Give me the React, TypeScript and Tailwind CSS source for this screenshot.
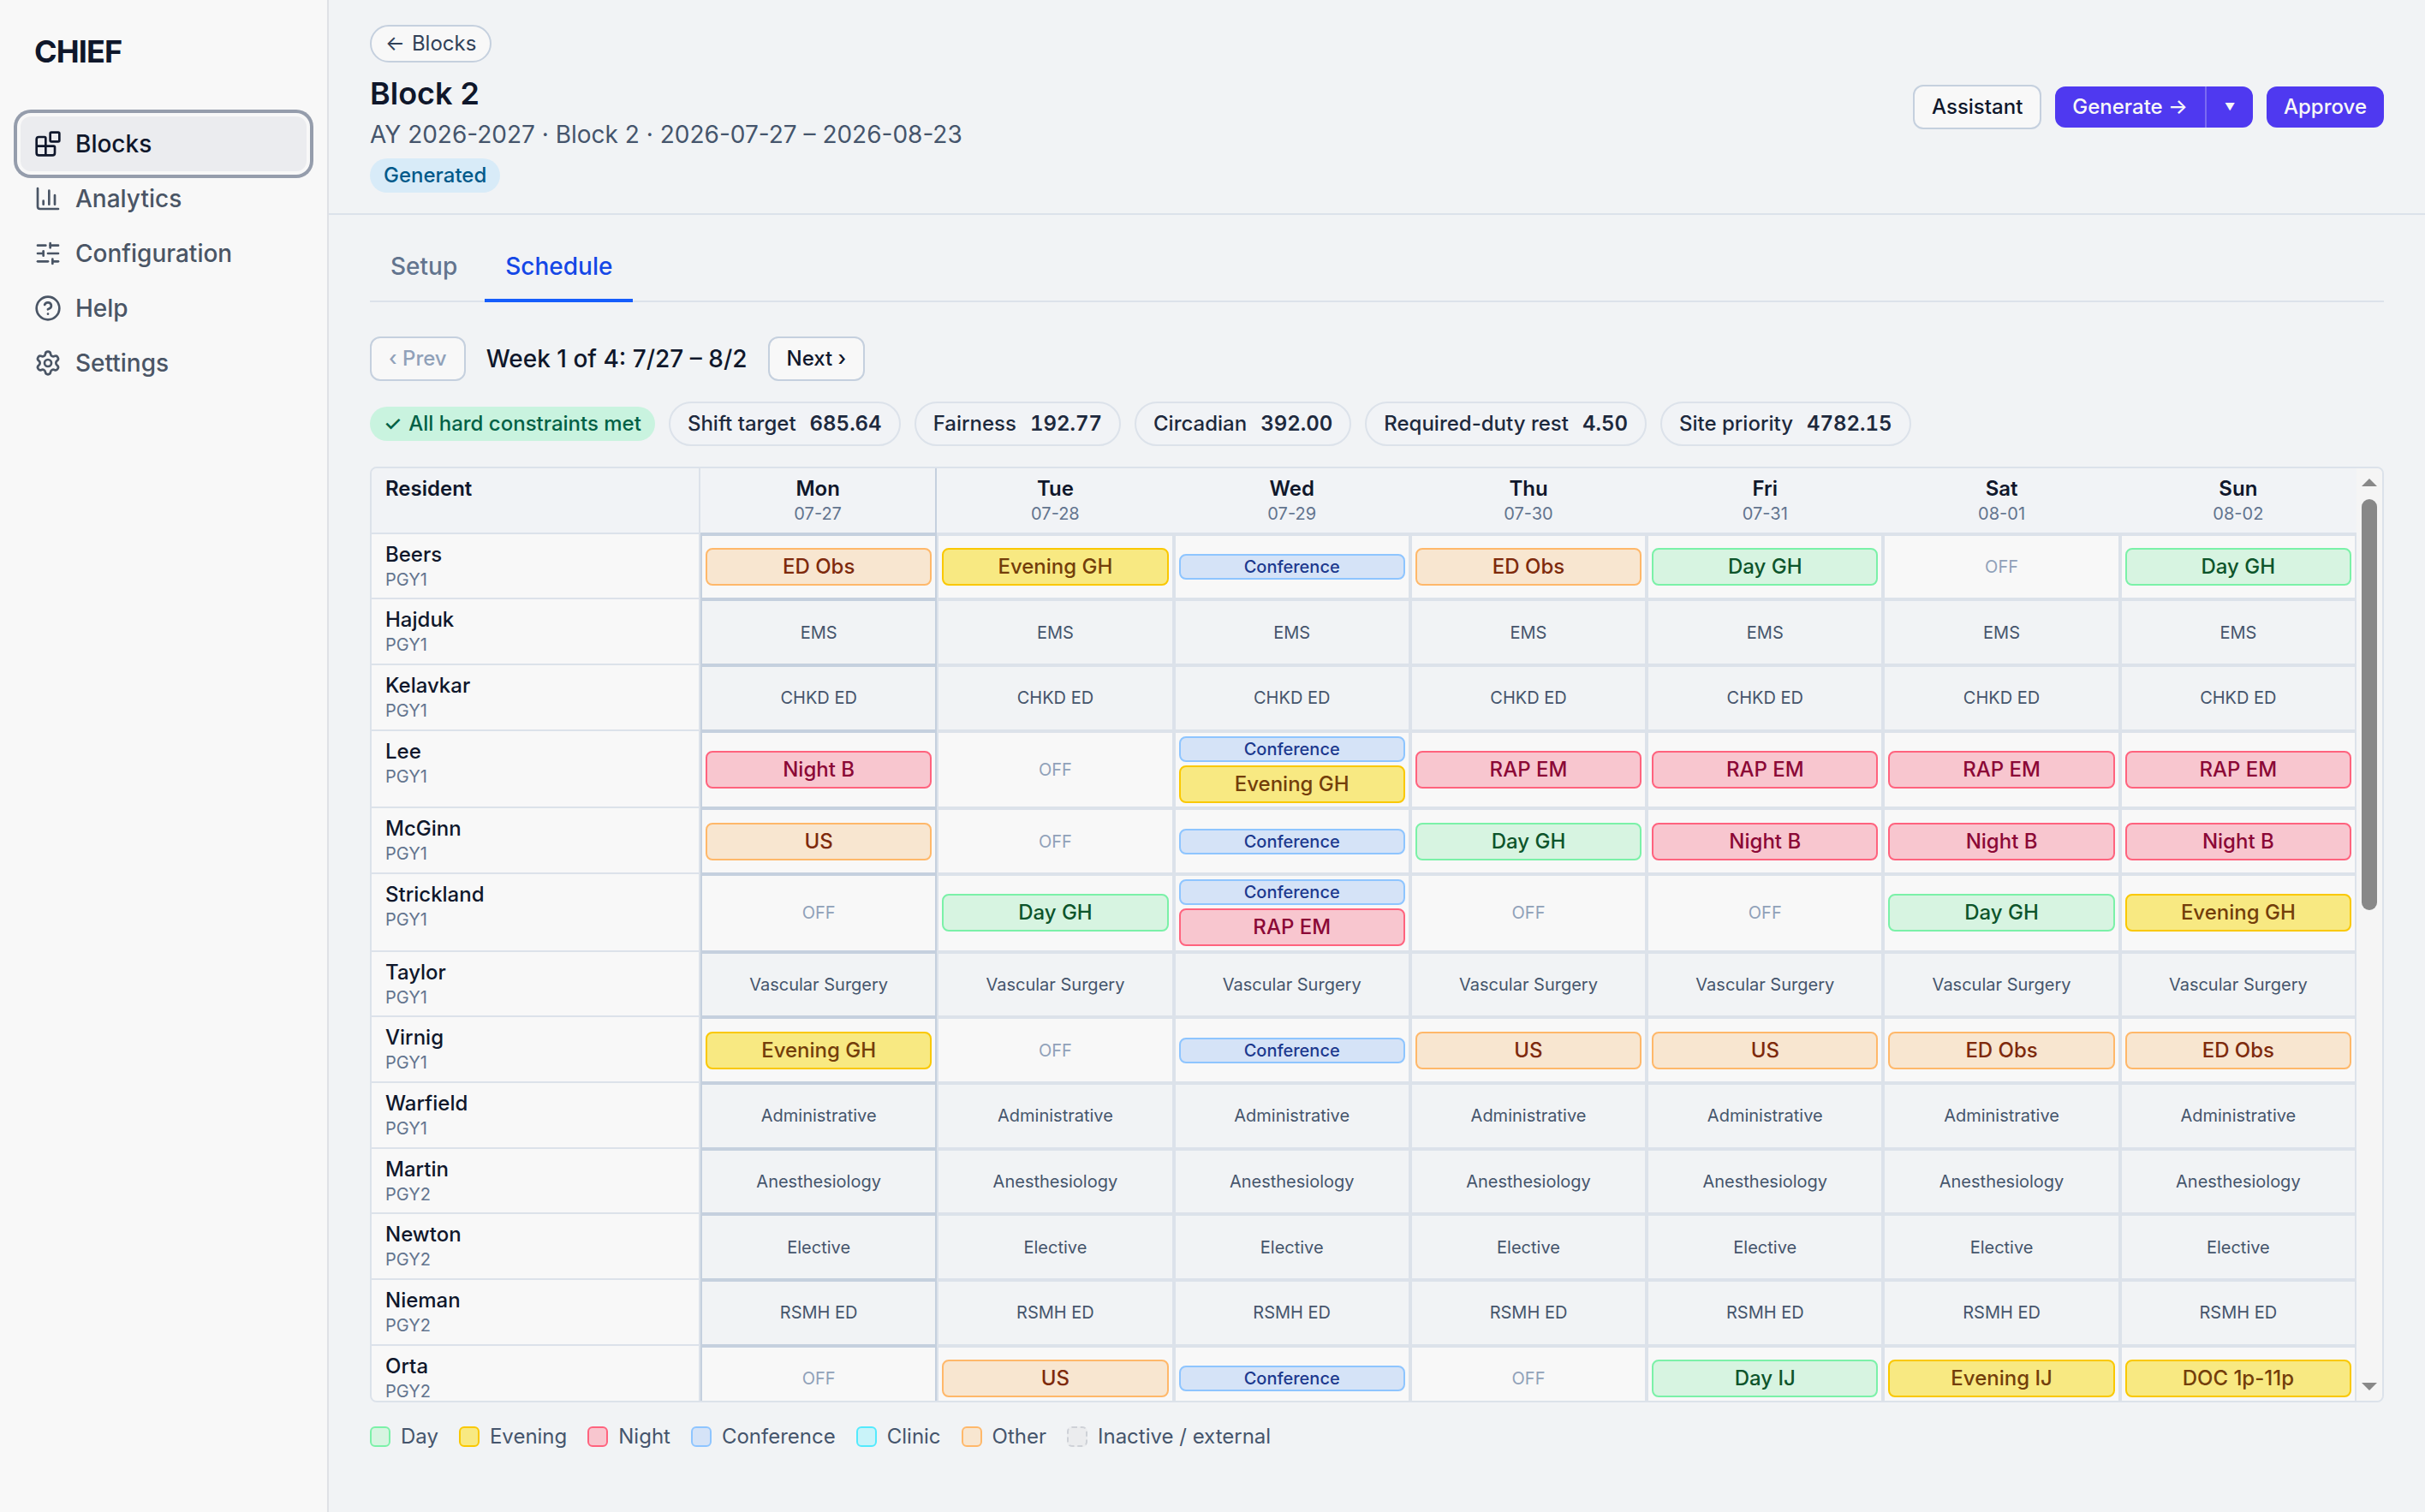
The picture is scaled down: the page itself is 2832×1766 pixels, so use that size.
import { Blocks, ChartColumn, CircleHelp, Settings, SlidersHorizontal } from "lucide-react";
import clsx from "clsx";

type Kind = "day" | "evening" | "night" | "conference" | "clinic" | "other" | "inactive";

const KIND: Record<Kind, string> = {
  day: "bg-[#d7f4e1] border-[#7bf1a8] text-green-900",
  evening: "bg-[#f8e982] border-[#fac800] text-yellow-900",
  night: "bg-[#f8c6cf] border-[#ff637e] text-rose-900",
  conference: "bg-[#d5e3f7] border-[#8ec5ff] text-blue-900",
  clinic: "bg-[#c9f3f9] border-[#53eafd] text-cyan-900",
  other: "bg-[#f8e6d0] border-[#ffb86a] text-orange-900",
  inactive: "bg-[#ebecee] border-dashed border-[#ced1d7]",
};

const NAV = [
  { label: "Blocks", icon: Blocks, active: true },
  { label: "Analytics", icon: ChartColumn },
  { label: "Configuration", icon: SlidersHorizontal },
  { label: "Help", icon: CircleHelp },
  { label: "Settings", icon: Settings },
];

const SCORES = [
  ["Shift target", "685.64"],
  ["Fairness", "192.77"],
  ["Circadian", "392.00"],
  ["Required-duty rest", "4.50"],
  ["Site priority", "4782.15"],
];

const DAYS = [
  ["Mon", "07-27"],
  ["Tue", "07-28"],
  ["Wed", "07-29"],
  ["Thu", "07-30"],
  ["Fri", "07-31"],
  ["Sat", "08-01"],
  ["Sun", "08-02"],
];

const LEGEND: [Kind, string][] = [
  ["day", "Day"],
  ["evening", "Evening"],
  ["night", "Night"],
  ["conference", "Conference"],
  ["clinic", "Clinic"],
  ["other", "Other"],
  ["inactive", "Inactive / external"],
];

type Resident = {
  name: string;
  level: string;
  // Seven cells, or a single service that covers the whole week
  week: string[] | string;
};

const RESIDENTS: Resident[] = [
  { name: "Beers", level: "PGY1", week: ["ED Obs", "Evening GH", "Conference", "ED Obs", "Day GH", "OFF", "Day GH"] },
  { name: "Hajduk", level: "PGY1", week: "EMS" },
  { name: "Kelavkar", level: "PGY1", week: "CHKD ED" },
  { name: "Lee", level: "PGY1", week: ["Night B", "OFF", "Conference|Evening GH", "RAP EM", "RAP EM", "RAP EM", "RAP EM"] },
  { name: "McGinn", level: "PGY1", week: ["US", "OFF", "Conference", "Day GH", "Night B", "Night B", "Night B"] },
  { name: "Strickland", level: "PGY1", week: ["OFF", "Day GH", "Conference|RAP EM", "OFF", "OFF", "Day GH", "Evening GH"] },
  { name: "Taylor", level: "PGY1", week: "Vascular Surgery" },
  { name: "Virnig", level: "PGY1", week: ["Evening GH", "OFF", "Conference", "US", "US", "ED Obs", "ED Obs"] },
  { name: "Warfield", level: "PGY1", week: "Administrative" },
  { name: "Martin", level: "PGY2", week: "Anesthesiology" },
  { name: "Newton", level: "PGY2", week: "Elective" },
  { name: "Nieman", level: "PGY2", week: "RSMH ED" },
  { name: "Orta", level: "PGY2", week: ["OFF", "US", "Conference", "OFF", "Day IJ", "Evening IJ", "DOC 1p-11p"] },
];

function kindOf(shift: string): Kind {
  if (shift === "Conference") return "conference";
  if (shift.startsWith("Day")) return "day";
  if (shift.startsWith("Evening") || shift.startsWith("DOC")) return "evening";
  if (shift.startsWith("Night") || shift.startsWith("RAP")) return "night";
  return "other";
}

function ShiftChip({ shift }: { shift: string }) {
  const kind = kindOf(shift);
  return (
    <div
      className={clsx(
        "flex w-full shrink-0 items-center justify-center rounded-lg border-2 font-medium",
        kind === "conference" ? "h-[30px] text-[20px]" : "h-11 text-[24px]",
        KIND[kind]
      )}
    >
      {shift}
    </div>
  );
}

function DayCell({ value, external, first }: { value: string; external: boolean; first: boolean }) {
  const muted = external || value === "OFF";
  return (
    <div
      className={clsx(
        "flex min-w-0 flex-col items-center justify-center gap-1 border-2 px-1",
        first ? "border-[#c5d0de]" : "border-[#dce2ea]",
        external ? "bg-[#f1f3f5]" : "bg-[#f8f8f8]"
      )}
    >
      {muted ? (
        <span className={clsx("text-[20px]", external ? "text-slate-600" : "text-slate-400")}>{value}</span>
      ) : (
        value.split("|").map((s) => <ShiftChip key={s} shift={s} />)
      )}
    </div>
  );
}

function ResidentRow({ resident }: { resident: Resident }) {
  const { name, level, week } = resident;
  const external = typeof week === "string";
  const cells = external ? DAYS.map(() => week) : week;
  const stacked = cells.some((c) => c.includes("|"));
  return (
    <div className={clsx("flex shrink-0", stacked ? "h-[90.66px]" : "h-[76.66px]")}>
      <div className="w-[384px] shrink-0 border-r-2 border-b-2 border-[#dce2ea] bg-[#f8f8f8] px-4 pt-2">
        <div className="text-[24px] leading-8 font-medium text-slate-900">{name}</div>
        <div className="text-[20px] leading-[26px] text-slate-500">{level}</div>
      </div>
      <div className="grid flex-1 grid-cols-7">
        {cells.map((c, i) => (
          <DayCell key={i} value={c} external={external} first={i === 0} />
        ))}
      </div>
    </div>
  );
}

function Sidebar() {
  return (
    <aside className="flex w-[384px] shrink-0 flex-col border-r-2 border-[#dfe1e6] bg-[#f8f8f8] px-6">
      <div className="mt-9 pl-4 text-[36px] leading-[48px] font-bold tracking-tight text-slate-900">CHIEF</div>
      <nav className="mt-[52px] flex flex-col">
        {NAV.map(({ label, icon: Icon, active }) => (
          <a
            key={label}
            className={clsx(
              "flex h-16 items-center gap-4 rounded-xl px-4 text-[28px] font-medium",
              active
                ? "bg-[#ebecef] text-slate-900 ring-4 ring-[#959dac] ring-offset-4 ring-offset-[#f8f8f8]"
                : "text-gray-600"
            )}
          >
            <Icon className="size-8" strokeWidth={2} />
            {label}
          </a>
        ))}
      </nav>
    </aside>
  );
}

function Header() {
  return (
    <header className="flex h-[251px] items-center justify-between border-b-2 border-[#dce2ea] px-12">
      <div className="flex flex-col items-start pt-1">
        <a className="flex h-11 items-center gap-2 rounded-full border-2 border-[#c5d0de] bg-[#f8f8f8] px-4 text-[24px] text-slate-700">
          <span>←</span>
          <span>Blocks</span>
        </a>
        <h1 className="mt-3 text-[36px] leading-[48px] font-semibold text-slate-900">Block 2</h1>
        <p className="mt-1 text-[28px] leading-10 text-slate-600">AY 2026-2027 · Block 2 · 2026-07-27 – 2026-08-23</p>
        <span className="mt-2 flex h-10 items-center rounded-full bg-[#d8ebf8] px-4 text-[24px] font-medium text-sky-800">
          Generated
        </span>
      </div>
      <div className="flex items-center gap-4 text-[24px] font-medium">
        <button className="h-[52px] rounded-xl border-2 border-[#c5d0de] bg-[#f8f8f8] px-5 text-slate-900">Assistant</button>
        <div className="flex h-12 overflow-hidden rounded-xl bg-[#4f39f0] text-[#f8f8f8]">
          <button className="px-5">Generate →</button>
          <button className="w-14 border-l-2 border-[#7b6bf2] text-[12px]">▼</button>
        </div>
        <button className="h-12 rounded-xl bg-[#4f39f0] px-5 text-[#f8f8f8]">Approve</button>
      </div>
    </header>
  );
}

function Scrollbar() {
  return (
    <div className="flex w-[30px] shrink-0 flex-col items-center bg-[#f5f5f5] text-[#888]">
      <svg className="mt-3 h-[9px] w-[18px]" viewBox="0 0 18 9">
        <path d="M0 9 9 0l9 9z" fill="currentColor" />
      </svg>
      <div className="mt-[15px] h-[480px] w-[18px] rounded-full bg-[#888]" />
      <svg className="mt-auto mb-3 h-[9px] w-[18px]" viewBox="0 0 18 9">
        <path d="M0 0h18L9 9z" fill="currentColor" />
      </svg>
    </div>
  );
}

function ScheduleTable() {
  return (
    <div className="mt-6 flex h-[1093px] overflow-hidden rounded-lg border-2 border-[#dce2ea]">
      <div className="flex min-w-0 flex-1 flex-col overflow-hidden">
        <div className="flex h-[76.7px] shrink-0 bg-[#f1f3f6]">
          <div className="w-[384px] shrink-0 border-r-2 border-b-2 border-[#dce2ea] px-4 pt-2 text-[24px] leading-8 font-semibold text-slate-900">
            Resident
          </div>
          <div className="grid flex-1 grid-cols-7">
            {DAYS.map(([day, date], i) => (
              <div
                key={day}
                className={clsx(
                  "border-b-2 pt-2 text-center",
                  i === 0 ? "border-r-2 border-[#c5d0de]" : "border-[#dce2ea]"
                )}
              >
                <div className="text-[24px] leading-8 font-semibold text-slate-900">{day}</div>
                <div className="text-[20px] leading-[26px] text-slate-500">{date}</div>
              </div>
            ))}
          </div>
        </div>
        {RESIDENTS.map((r) => (
          <ResidentRow key={r.name} resident={r} />
        ))}
      </div>
      <Scrollbar />
    </div>
  );
}

export default function App() {
  return (
    <div className="flex h-[1766px] w-[2832px] overflow-hidden bg-[#f1f3f5] font-['Inter',sans-serif]">
      <Sidebar />
      <div className="flex min-w-0 flex-1 flex-col">
        <Header />
        <main className="flex flex-col px-12 pt-5">
          <div className="flex h-[82px] gap-2 border-b-2 border-[#dce2ea] text-[28px] font-medium">
            <button className="h-[82px] px-6 pb-0.5 text-slate-500">Setup</button>
            <button className="h-[82px] border-b-4 border-[#155dfc] px-6 pt-0.5 text-[#1447e6]">Schedule</button>
          </div>

          <div className="mt-10 flex items-center gap-6">
            <button className="h-[52px] rounded-xl border-2 border-[#c5d0de] bg-[#f8f8f8] px-5 text-[24px] font-medium text-slate-400">
              ‹ Prev
            </button>
            <span className="text-[28px] leading-10 font-medium text-slate-900">Week 1 of 4: 7/27 – 8/2</span>
            <button className="h-[52px] rounded-xl border-2 border-[#c5d0de] bg-[#f8f8f8] px-5 text-[24px] font-medium text-slate-900">
              Next ›
            </button>
          </div>

          <div className="mt-6 flex items-center gap-4 text-[24px] font-medium">
            <span className="flex h-10 items-center gap-2 rounded-full bg-[#c9f3df] px-4 text-emerald-800">
              <span>✓</span>
              <span>All hard constraints met</span>
            </span>
            {SCORES.map(([label, value]) => (
              <span
                key={label}
                className="flex h-[52px] items-center gap-4 rounded-full border-2 border-[#dce2ea] bg-[#f1f3f6] px-5 text-slate-800"
              >
                {label}
                <span className="font-semibold tabular-nums">{value}</span>
              </span>
            ))}
          </div>

          <ScheduleTable />

          <div className="mt-[22px] flex items-center gap-6 text-[24px] leading-9 text-slate-600">
            {LEGEND.map(([kind, label]) => (
              <span key={kind} className="flex items-center gap-3">
                <span className={clsx("size-6 rounded-md border-2", KIND[kind])} />
                {label}
              </span>
            ))}
          </div>
        </main>
      </div>
    </div>
  );
}
